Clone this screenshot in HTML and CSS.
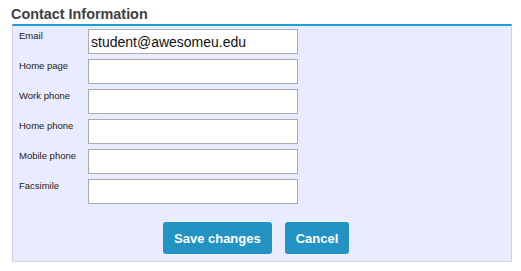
FILE: index.html
```html
<!DOCTYPE html>
<html lang="en">
<head>
    <meta charset="UTF-8">
    <title>Contact Information</title>
    <link rel="stylesheet" href="styles.css">
</head>
<body>
    <div class="section">
        <h2 class="section-title">Contact Information</h2>
        <form class="panel">
            <div class="row">
                <label class="label" for="email">Email</label>
                <input class="field field-filled" id="email" type="text" value="student@awesomeu.edu">
            </div>
            <div class="row">
                <label class="label" for="homepage">Home page</label>
                <input class="field" id="homepage" type="text">
            </div>
            <div class="row">
                <label class="label" for="workphone">Work phone</label>
                <input class="field" id="workphone" type="text">
            </div>
            <div class="row">
                <label class="label" for="homephone">Home phone</label>
                <input class="field" id="homephone" type="text">
            </div>
            <div class="row">
                <label class="label" for="mobile">Mobile phone</label>
                <input class="field" id="mobile" type="text">
            </div>
            <div class="row">
                <label class="label" for="fax">Facsimile</label>
                <input class="field" id="fax" type="text">
            </div>
            <div class="actions">
                <button class="btn" type="button">Save changes</button>
                <button class="btn" type="button">Cancel</button>
            </div>
        </form>
    </div>
</body>
</html>
```

FILE: styles.css
```css
* {
    margin: 0;
    padding: 0;
    box-sizing: border-box;
}

body {
    font-family: 'Liberation Sans', Arial, sans-serif;
    background: #FFFFFF;
    color: #222222;
}

.section {
    padding: 6px 0 0 12px;
    width: 512px;
}

.section-title {
    font-size: 14.4px;
    line-height: 16px;
    font-weight: bold;
    color: #3E3E3E;
    margin: 0 0 2px -1px;
}

.panel {
    background: #E9EBFE;
    border-top: 2px solid #1BA1D8;
    border-left: 1px solid #D2D2E4;
    border-right: 1px solid #D2D2E4;
    border-bottom: 1px solid #D2D2E4;
    padding: 3px 0 7px 6px;
}

.row {
    display: flex;
    align-items: flex-start;
    margin-bottom: 5px;
}

.label {
    width: 69px;
    font-size: 9.5px;
    line-height: 12px;
    padding-top: 1px;
    color: #222222;
}

.field {
    width: 210px;
    height: 25px;
    border: 1px solid #AAAAAA;
    background: #FFFFFF;
    font-family: 'Liberation Sans', Arial, sans-serif;
    font-size: 14px;
    padding: 0 2px;
    color: #111111;
    outline: none;
}

.actions {
    display: flex;
    gap: 13px;
    padding: 13px 0 0 144px;
}

.btn {
    height: 32px;
    padding: 0 11px;
    background: #2293C3;
    color: #FFFFFF;
    border: none;
    border-radius: 3px;
    font-family: 'Liberation Sans', Arial, sans-serif;
    font-size: 13px;
    font-weight: bold;
    cursor: pointer;
}
```
